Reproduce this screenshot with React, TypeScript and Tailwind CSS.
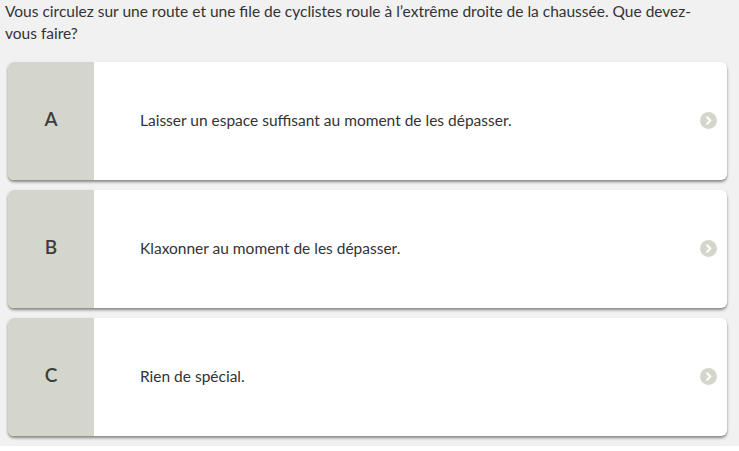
const answers = [
  { letter: "A", text: "Laisser un espace suffisant au moment de les dépasser." },
  { letter: "B", text: "Klaxonner au moment de les dépasser." },
  { letter: "C", text: "Rien de spécial." },
];

function Chevron() {
  return (
    <svg width="17" height="17" viewBox="0 0 17 17">
      <circle cx="8.5" cy="8.5" r="8.5" fill="#d4d6cc" />
      <path d="M7.2 5.3 L10.3 8.5 L7.2 11.7" fill="none" stroke="#fff" strokeWidth="2.2" strokeLinecap="round" strokeLinejoin="round" />
    </svg>
  );
}

export default function App() {
  return (
    <main className="h-[446px] w-[739px] bg-[#f1f1f1] font-['Lato',sans-serif] text-[#333]">
      <p className="w-[720px] px-[5px] text-[15.5px] leading-[22px]">
        Vous circulez sur une route et une file de cyclistes roule à l’extrême droite de la chaussée. Que devez-vous faire?
      </p>
      <div className="mt-[18px] flex w-[719px] flex-col gap-[10px] pl-[8px]">
        {answers.map((a) => (
          <div
            key={a.letter}
            className="flex h-[118px] w-[719px] overflow-hidden rounded-[6px] bg-white shadow-[0_2px_3px_rgba(0,0,0,0.45)]"
          >
            <div className="flex w-[86px] shrink-0 items-center justify-center bg-[#d4d6cc] pb-[3px] text-[19px] font-semibold text-[#3d3d3d]">
              {a.letter}
            </div>
            <div className="flex flex-1 items-center pb-[1px] pl-[46px] text-[15.5px]">{a.text}</div>
            <div className="flex items-center pb-[2px] pr-[10px]">
              <Chevron />
            </div>
          </div>
        ))}
      </div>
    </main>
  );
}
